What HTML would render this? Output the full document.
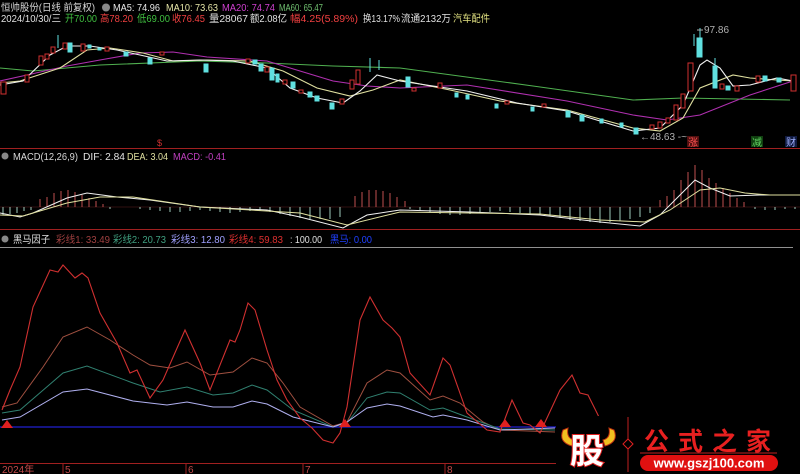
<!DOCTYPE html>
<html><head><meta charset="utf-8"><style>
html,body{margin:0;padding:0;background:#000;width:800px;height:474px;overflow:hidden}
svg{display:block}
text{font-family:"Liberation Sans","Noto Sans CJK SC",sans-serif}
</style></head><body>
<svg width="800" height="474" viewBox="0 0 800 474" xmlns="http://www.w3.org/2000/svg">
<rect width="800" height="474" fill="#000"/>
<!-- header -->
<g font-size="10" lengthAdjust="spacingAndGlyphs">
<text x="1" y="11" fill="#d8d8d8" textLength="94" lengthAdjust="spacingAndGlyphs">恒帅股份(日线 前复权)</text>
<circle cx="106" cy="7.5" r="4" fill="#888"/>
<text x="113" y="11" fill="#e8e8e8" textLength="47" lengthAdjust="spacingAndGlyphs">MA5: 74.96</text>
<text x="166" y="11" fill="#e6e6a8" textLength="52" lengthAdjust="spacingAndGlyphs">MA10: 73.63</text>
<text x="222" y="11" fill="#d040d0" textLength="53" lengthAdjust="spacingAndGlyphs">MA20: 74.74</text>
<text x="279" y="11" fill="#70c070" textLength="44" lengthAdjust="spacingAndGlyphs">MA60: 65.47</text>
<text x="1" y="22" fill="#e0e0e0" textLength="60" lengthAdjust="spacingAndGlyphs">2024/10/30/三</text>
<text x="65" y="22" fill="#40c040" textLength="32" lengthAdjust="spacingAndGlyphs">开70.00</text>
<text x="100" y="22" fill="#f04040" textLength="33" lengthAdjust="spacingAndGlyphs">高78.20</text>
<text x="137" y="22" fill="#40c040" textLength="33" lengthAdjust="spacingAndGlyphs">低69.00</text>
<text x="172" y="22" fill="#f04040" textLength="33" lengthAdjust="spacingAndGlyphs">收76.45</text>
<text x="209" y="22" fill="#e0e0e0" textLength="39" lengthAdjust="spacingAndGlyphs">量28067</text>
<text x="250" y="22" fill="#e0e0e0" textLength="37" lengthAdjust="spacingAndGlyphs">额2.08亿</text>
<text x="290" y="22" fill="#f04040" textLength="68" lengthAdjust="spacingAndGlyphs">幅4.25(5.89%)</text>
<text x="363" y="22" fill="#e0e0e0" textLength="37" lengthAdjust="spacingAndGlyphs">换13.17%</text>
<text x="401" y="22" fill="#e0e0e0" textLength="50" lengthAdjust="spacingAndGlyphs">流通2132万</text>
<text x="453" y="22" fill="#e0e080" textLength="37" lengthAdjust="spacingAndGlyphs">汽车配件</text>
</g>
<!-- main MA lines -->
<g fill="none" stroke-width="1.1">
<polyline stroke="#50b050" points="0,68 33,71 100,65 200,61 267,63 333,66 400,68 533,86 633,100 683,98 790,100"/>
<polyline stroke="#b030b0" points="0,81 27,75 67,66 100,60 140,53 173,52 207,57 267,61 300,71 333,81 367,86 400,88 467,85 567,101 633,115 667,120 700,115 750,95 793,81"/>
<polyline stroke="#e0e0a0" points="0,83 20,81 60,68 87,50 110,48 143,53 173,61 207,60 250,61 283,71 317,88 350,96 373,90 400,80 450,90 500,101 567,110 633,128 660,131 683,118 700,88 733,75 750,78 777,80 793,81"/>
<polyline stroke="#f0f0f0" points="0,85 23,81 50,55 67,46 90,46 117,50 140,55 167,61 200,60 233,61 267,68 290,88 317,98 343,103 360,91 377,75 400,81 433,86 467,91 517,103 567,111 633,131 660,128 683,105 700,65 707,60 720,68 733,86 750,85 777,78 793,81"/>
</g>
<!-- candles -->
<g stroke-width="1">
<g fill="#000" stroke="#d03030">
<rect x="1" y="82" width="5" height="12"/><rect x="25" y="75" width="4" height="7"/><rect x="39" y="56" width="4" height="9"/><rect x="45" y="54" width="4" height="5"/><rect x="51" y="47" width="4" height="6"/><rect x="63" y="43" width="4" height="6"/><rect x="81" y="44" width="4" height="7"/><rect x="105" y="47" width="4" height="4"/><rect x="160" y="52" width="4" height="3"/><rect x="246" y="59" width="4" height="4"/><rect x="265" y="67" width="4" height="5"/><rect x="283" y="80" width="4" height="4"/><rect x="299" y="90" width="4" height="3"/><rect x="340" y="99" width="4" height="5"/><rect x="350" y="80" width="4" height="9"/><rect x="356" y="70" width="4" height="14"/><rect x="412" y="88" width="4" height="3"/><rect x="438" y="83" width="4" height="5"/><rect x="505" y="101" width="4" height="3"/><rect x="542" y="104" width="4" height="3"/><rect x="650" y="125" width="4" height="4"/><rect x="658" y="122" width="4" height="6"/><rect x="666" y="118" width="4" height="5"/><rect x="674" y="105" width="4" height="15"/><rect x="681" y="94" width="4" height="14"/><rect x="688" y="63" width="5" height="28"/><rect x="720" y="84" width="4" height="5"/><rect x="735" y="86" width="4" height="5"/><rect x="756" y="76" width="4" height="6"/><rect x="791" y="75" width="5" height="16"/>
</g>
<g fill="#60e0e0" stroke="#60e0e0">
<rect x="68" y="43" width="4" height="9"/><rect x="88" y="45" width="3" height="3"/><rect x="98" y="48" width="3" height="2"/><rect x="124" y="52" width="4" height="4"/><rect x="148" y="58" width="4" height="6"/><rect x="204" y="64" width="4" height="8"/><rect x="253" y="60" width="4" height="4"/><rect x="259" y="64" width="4" height="7"/><rect x="270" y="68" width="4" height="12"/><rect x="276" y="74" width="3" height="8"/><rect x="291" y="82" width="4" height="6"/><rect x="308" y="92" width="4" height="5"/><rect x="315" y="96" width="4" height="5"/><rect x="330" y="103" width="4" height="6"/><rect x="406" y="77" width="4" height="10"/><rect x="455" y="93" width="3" height="4"/><rect x="466" y="95" width="3" height="4"/><rect x="495" y="104" width="3" height="4"/><rect x="531" y="107" width="3" height="4"/><rect x="566" y="111" width="4" height="6"/><rect x="580" y="115" width="4" height="6"/><rect x="600" y="119" width="3" height="4"/><rect x="620" y="123" width="3" height="4"/><rect x="634" y="128" width="4" height="6"/><rect x="697" y="38" width="5" height="19"/><rect x="713" y="66" width="4" height="22"/><rect x="726" y="86" width="4" height="4"/><rect x="763" y="76" width="4" height="5"/><rect x="777" y="78" width="4" height="4"/>
</g>
<g stroke="#60e0e0"><line x1="58" y1="35" x2="58" y2="48"/><line x1="370" y1="58" x2="370" y2="72"/><line x1="379" y1="60" x2="379" y2="70"/><line x1="700" y1="28" x2="700" y2="40"/><line x1="715" y1="58" x2="715" y2="68"/><line x1="694" y1="34" x2="694" y2="46"/></g>
</g>
<text x="704" y="33" fill="#b0b0b0" font-size="10">97.86</text>
<line x1="697" y1="30" x2="703" y2="30" stroke="#b0b0b0"/>
<text x="640" y="140" fill="#b0b0b0" font-size="10">←48.63 -~</text>
<text x="157" y="146" fill="#d03030" font-size="9">$</text>
<rect x="687" y="136" width="12" height="11" fill="#501010"/><text x="688" y="146" fill="#ff5050" font-size="10">涨</text>
<rect x="751" y="136" width="12" height="11" fill="#104010"/><text x="752" y="146" fill="#60d060" font-size="10">减</text>
<rect x="785" y="136" width="12" height="11" fill="#101a40"/><text x="786" y="146" fill="#a0b0ff" font-size="10">财</text>
<line x1="0" y1="148.5" x2="800" y2="148.5" stroke="#a02020"/>
<!-- MACD -->
<circle cx="5" cy="156" r="3.5" fill="#888"/>
<g font-size="10"><text x="13" y="160" fill="#d8d8d8" textLength="65" lengthAdjust="spacingAndGlyphs">MACD(12,26,9)</text><text x="83" y="160" fill="#e0e0e0" textLength="42" lengthAdjust="spacingAndGlyphs">DIF: 2.84</text><text x="127" y="160" fill="#e0e0a0" textLength="41" lengthAdjust="spacingAndGlyphs">DEA: 3.04</text><text x="173" y="160" fill="#c040c0" textLength="53" lengthAdjust="spacingAndGlyphs">MACD: -0.41</text></g>
<line x1="0" y1="207" x2="800" y2="207" stroke="#602020" stroke-width="0.5"/>
<g stroke="#c05050"><path d="M40 207V199M47 207V197M54 207V193M61 207V191M68 207V190M75 207V192M82 207V195M89 207V198M96 207V201M103 207V204M355 207V196M362 207V192M369 207V190M376 207V190M383 207V191M390 207V193M397 207V197M405 207V201M660 207V200M667 207V196M674 207V190M681 207V180M688 207V172M695 207V165M702 207V170M709 207V178M716 207V183M723 207V188M730 207V193M737 207V198M744 207V202"/></g>
<g stroke="#b0e0d0" stroke-width="0.9"><path d="M3 207V215M10 207V214M17 207V213M24 207V211M31 207V210M110 207V209M140 207V209M150 207V210M160 207V211M170 207V212M180 207V212M190 207V211M200 207V210M210 207V211M220 207V212M230 207V213M240 207V212M250 207V211M260 207V211M270 207V212M280 207V214M290 207V216M300 207V218M310 207V219M320 207V219M330 207V219M340 207V217M410 207V209M420 207V211M430 207V212M440 207V214M450 207V215M460 207V215M470 207V214M480 207V213M490 207V212M500 207V211M510 207V212M520 207V213M530 207V214M540 207V215M550 207V216M560 207V218M570 207V220M580 207V221M590 207V222M600 207V223M610 207V222M620 207V221M630 207V219M640 207V217M650 207V213M755 207V209M765 207V210M775 207V210M785 207V209M795 207V209"/></g>
<polyline fill="none" stroke="#f0f0f0" points="0,213 20,217 33,213 67,198 87,193 117,197 150,200 200,207 267,210 300,217 343,228 367,215 400,210 470,212 540,215 600,222 640,226 660,215 680,195 695,180 710,188 730,196 760,195 800,195"/>
<polyline fill="none" stroke="#e0e0a0" points="0,215 23,216 67,203 100,197 133,197 200,207 300,213 347,225 400,212 470,213 540,214 600,220 645,222 670,210 700,190 720,188 745,193 770,195 800,195"/>
<line x1="0" y1="229.5" x2="800" y2="229.5" stroke="#a02020"/>
<!-- 黑马因子 -->
<circle cx="5" cy="239" r="3.5" fill="#888"/>
<g font-size="10"><text x="13" y="243" fill="#e0e0e0" textLength="37" lengthAdjust="spacingAndGlyphs">黑马因子</text>
<text x="56" y="243" fill="#a04040" textLength="54" lengthAdjust="spacingAndGlyphs">彩线1: 33.49</text>
<text x="113" y="243" fill="#40a080" textLength="53" lengthAdjust="spacingAndGlyphs">彩线2: 20.73</text>
<text x="171" y="243" fill="#a0a0ff" textLength="54" lengthAdjust="spacingAndGlyphs">彩线3: 12.80</text>
<text x="229" y="243" fill="#e03030" textLength="54" lengthAdjust="spacingAndGlyphs">彩线4: 59.83</text>
<text x="290" y="243" fill="#e0e0e0" textLength="32" lengthAdjust="spacingAndGlyphs">: 100.00</text>
<text x="330" y="243" fill="#2040ff" textLength="42" lengthAdjust="spacingAndGlyphs">黑马: 0.00</text></g>
<line x1="0" y1="247.5" x2="793" y2="247.5" stroke="#c0c0c0" stroke-width="0.8"/>
<line x1="0" y1="427" x2="560" y2="427" stroke="#2020d0" stroke-width="1.2"/>
<g fill="none" stroke-width="1">
<polyline stroke="#a05040" points="2,407 17,403 43,367 63,337 87,327 110,340 133,355 150,365 170,368 187,362 210,375 233,372 252,358 267,363 283,383 300,407 333,426 347,422 367,383 387,370 400,373 430,400 443,396 460,403 483,422 500,430 555,432 M650,430 677,403 710,352 733,380 750,392 763,390 787,373 793,367"/>
<polyline stroke="#308070" points="2,413 20,410 63,373 87,366 133,383 160,392 187,387 213,395 233,393 252,385 267,390 293,410 333,427 347,423 367,398 387,392 400,393 430,410 443,408 467,417 500,429 555,430 M655,428 673,410 707,380 733,392 753,405 773,400 793,390"/>
<polyline stroke="#b0b0f0" points="2,420 20,417 63,392 87,389 133,401 167,405 187,402 213,407 233,407 252,401 267,404 293,417 333,427 347,422 367,408 387,404 400,406 433,417 443,415 467,420 500,430 555,428 M660,425 680,413 700,398 733,405 753,413 773,410 793,405"/>
<polyline stroke="#d03030" stroke-width="1.1" points="2,410 10,390 20,367 33,307 50,270 58,272 63,265 75,278 82,273 88,278 100,313 117,343 130,373 137,370 150,398 163,380 185,330 200,363 210,390 230,340 235,342 240,330 248,303 255,310 267,350 277,380 287,400 300,418 312,428 323,440 333,443 340,433 347,407 360,320 370,297 383,320 392,328 400,337 410,373 430,395 443,358 450,365 467,413 487,430 500,432 512,400 523,423 530,425 540,433 560,390 572,375 580,393 588,395 597,413 610,440 M640,440 650,413 663,337 695,247 703,263 717,313 738,378 750,375 763,350 773,323 780,323 787,340 793,320"/>
</g>
<g fill="#e02020"><path d="M1,428 L7,420 L13,428Z M339,427 L345,419 L351,427Z M499,427 L505,419 L511,427Z M535,427 L541,419 L547,427Z"/></g>
<!-- axis -->
<line x1="0" y1="463.5" x2="560" y2="463.5" stroke="#a02020"/>
<g stroke="#a02020"><path d="M63 463V474M186 463V474M303 463V474M445 463V474"/></g>
<g font-size="10" fill="#c04848"><text x="2" y="473">2024年</text><text x="65" y="473">5</text><text x="188" y="473">6</text><text x="305" y="473">7</text><text x="447" y="473">8</text></g>
<!-- watermark -->
<rect x="556" y="416" width="244" height="58" fill="#000"/>
<path d="M563,430 Q558,442 572,446 L574,440 Q566,438 568,428Z" fill="#f0c020" stroke="#c03010"/>
<path d="M614,430 Q619,442 605,446 L603,440 Q611,438 609,428Z" fill="#f0c020" stroke="#c03010"/>
<text x="570" y="463" font-size="34" font-weight="bold" fill="#fff" stroke="#e02020" stroke-width="2" paint-order="stroke" font-family="'Noto Sans CJK SC',sans-serif">股</text>
<line x1="628" y1="417" x2="628" y2="472" stroke="#c02020"/>
<path d="M628,439 L633,444 L628,449 L623,444Z" fill="#000" stroke="#e02020"/>
<text x="644" y="450" font-size="25" font-weight="bold" fill="#e82020" letter-spacing="9" font-family="'Noto Serif CJK SC',serif">公式之家</text>
<line x1="640" y1="453" x2="777" y2="453" stroke="#c02020"/>
<rect x="640" y="455" width="138" height="16" rx="8" fill="#e01010"/>
<text x="709" y="467.5" font-size="13" font-weight="bold" fill="#fff" text-anchor="middle">www.gszj100.com</text>
</svg>
</body></html>
